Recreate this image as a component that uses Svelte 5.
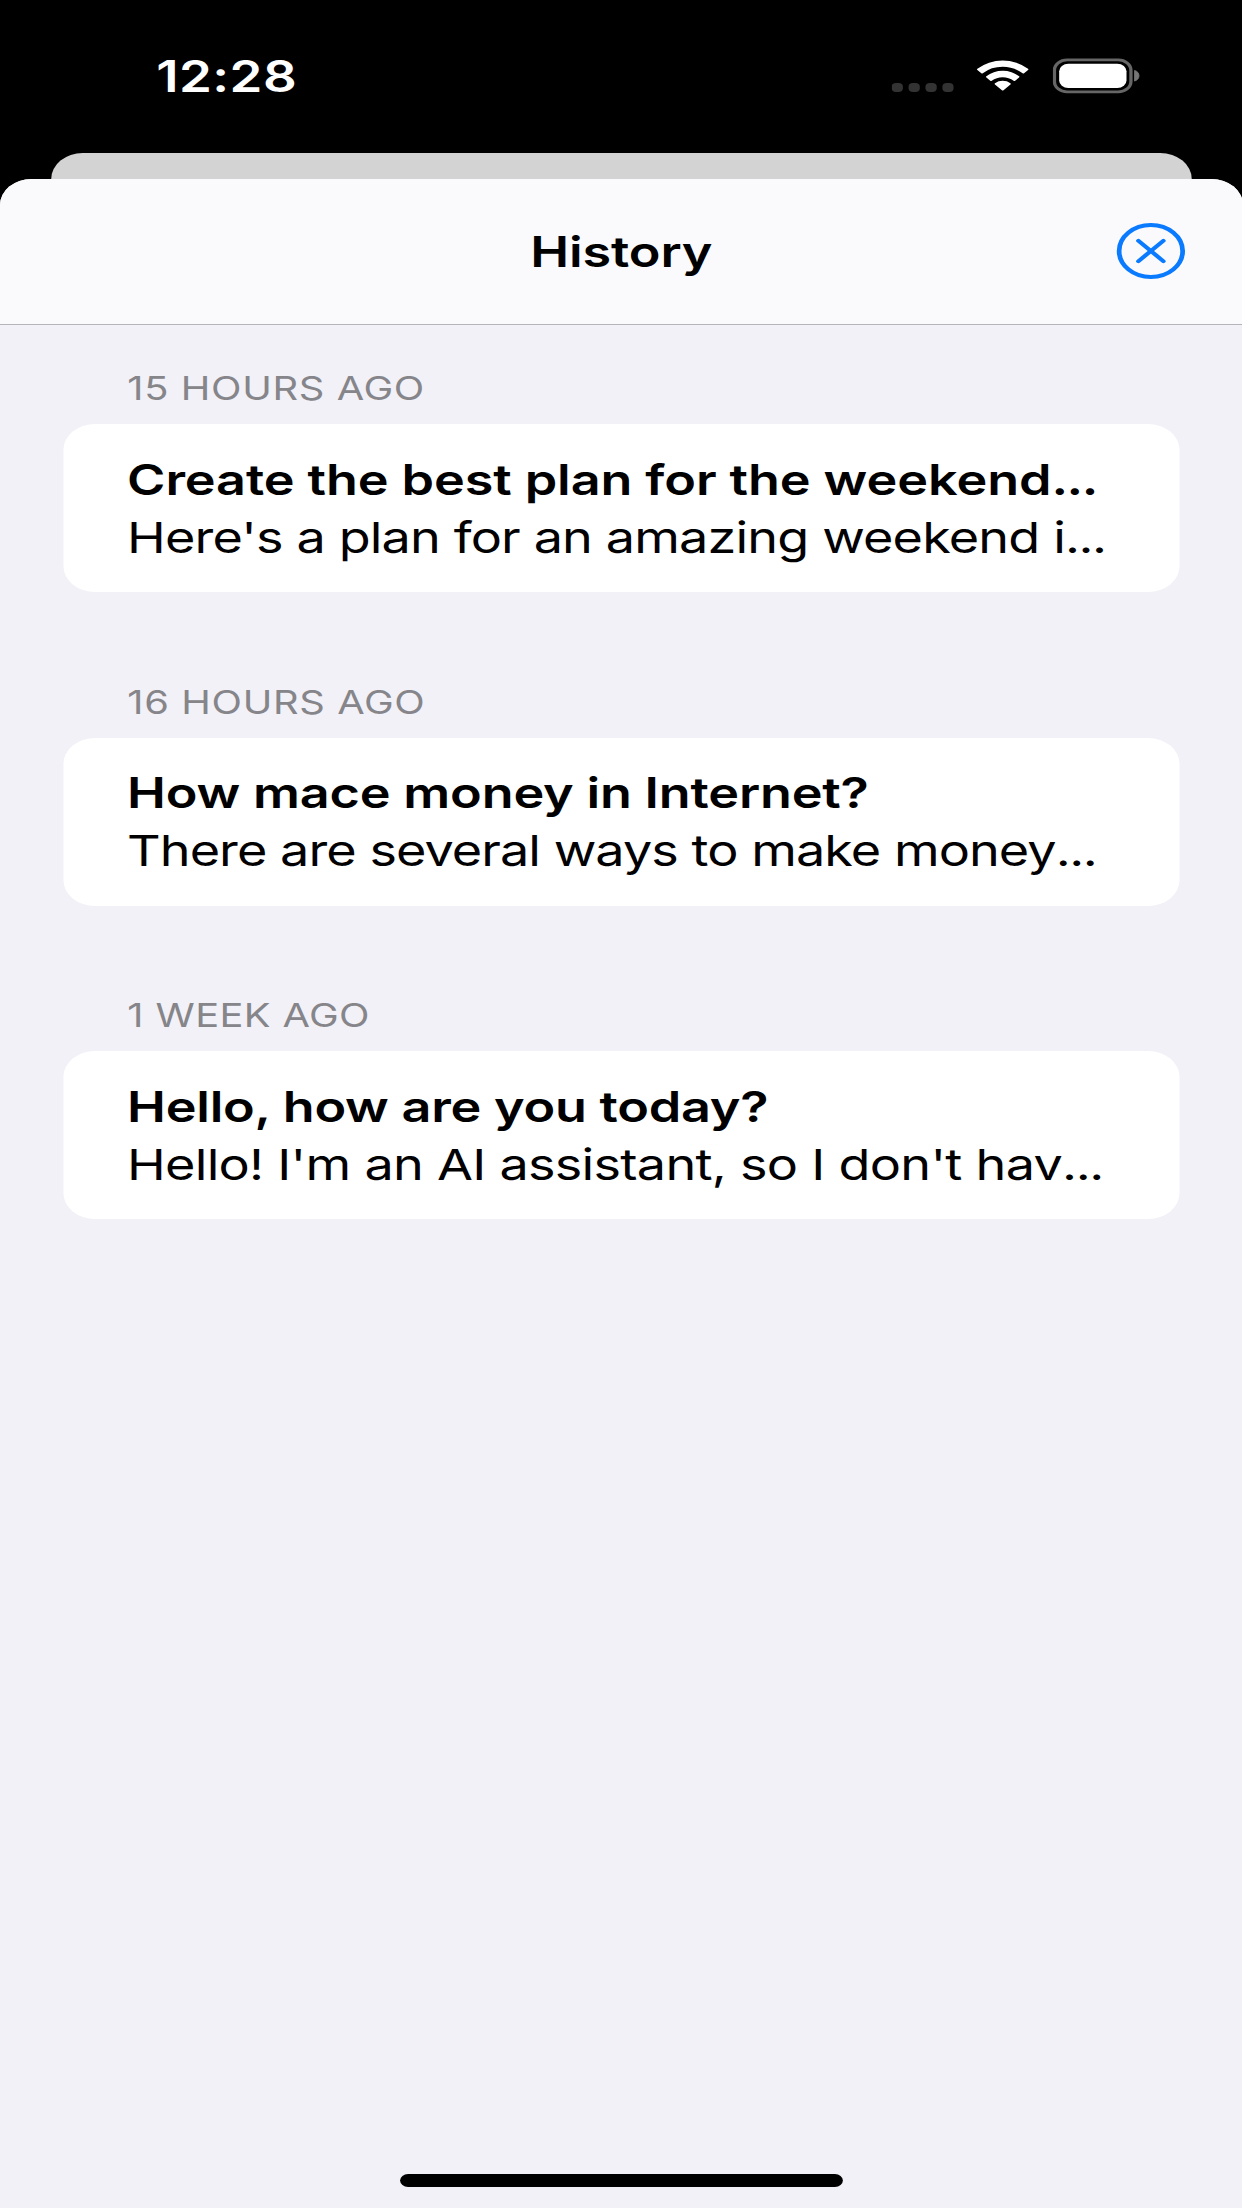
<script>
  let time = '12:28';

  // spacing values are letter-spacing in px
  const sections = [
    {
      when: '15 hours ago',
      whenSpacing: 0.2,
      title: 'Create the best plan for the weekend',
      titleCut: true,
      preview: "Here's a plan for an amazing weekend i",
      titleSpacing: -0.03,
      previewSpacing: -0.27
    },
    {
      when: '16 hours ago',
      whenSpacing: 0.2,
      title: 'How mace money in Internet?',
      titleCut: false,
      preview: 'There are several ways to make money',
      titleSpacing: -0.06,
      previewSpacing: -0.3
    },
    {
      when: '1 week ago',
      whenSpacing: 0.12,
      title: 'Hello, how are you today?',
      titleCut: false,
      preview: "Hello! I'm an AI assistant, so I don't hav",
      titleSpacing: -0.08,
      previewSpacing: -0.23
    }
  ];
</script>

<div class="window">
  <div class="screen">
    <div class="status-bar">
      <span class="time">{time}</span>
      <div class="status-icons">
        <svg class="signal" width="19.6" height="14" viewBox="0 0 19.6 14">
          {#each [0, 1, 2, 3] as i}
            <rect x={i * 5.35} y="9.6" width="3.55" height="3.5" rx="1.4" fill="#333" />
          {/each}
        </svg>
        <svg class="wifi" width="17" height="14" viewBox="0 0 17 14" fill="#fff">
          <path d="M8.5 3.4c2.35 0 4.6.9 6.3 2.5.13.12.33.12.46 0l1.25-1.25a.34.34 0 0 0 0-.48 11.65 11.65 0 0 0-16.02 0 .34.34 0 0 0 0 .48L1.74 5.9c.13.12.33.12.46 0A9.2 9.2 0 0 1 8.5 3.4z" />
          <path d="M8.5 7.45c1.28 0 2.52.48 3.47 1.34.13.12.33.12.46 0l1.24-1.26a.34.34 0 0 0 0-.5 7.5 7.5 0 0 0-10.34 0 .34.34 0 0 0 0 .5l1.24 1.26c.13.12.33.12.46 0A5.2 5.2 0 0 1 8.5 7.45z" />
          <path d="M10.95 10.22a.34.34 0 0 0 0-.5 3.8 3.8 0 0 0-4.9 0 .34.34 0 0 0 0 .5l2.2 2.2c.14.13.36.13.5 0z" />
        </svg>
        <svg class="battery" width="28" height="14" viewBox="0 0 28 14">
          <rect x="0.55" y="0.75" width="24.2" height="12.3" rx="4" fill="none" stroke="#666" stroke-width="1.05" />
          <rect x="2.05" y="2.2" width="21.3" height="9.4" rx="2.9" fill="#fff" />
          <path d="M25.9 4.8v4.1a2.2 2.2 0 0 0 0-4.1z" fill="#777" stroke="#777" stroke-width="0.3" />
        </svg>
      </div>
    </div>

    <div class="back-sheet"></div>

    <div class="sheet">
      <header>
        <h1>History</h1>
        <button class="close" aria-label="Close">
          <svg width="22" height="22" viewBox="0 0 22 22" fill="none" stroke="#0a7aff">
            <circle cx="11" cy="10.8" r="10.05" stroke-width="1.5" />
            <path d="M7.05 6.85l7.9 7.9M14.95 6.85l-7.9 7.9" stroke-width="1.45" stroke-linecap="round" />
          </svg>
        </button>
      </header>

      <main>
        {#each sections as section}
          <section>
            <h2 style="letter-spacing: {section.whenSpacing}px;">{section.when}</h2>
            <div class="card">
              <div class="title" style="letter-spacing: {section.titleSpacing}px;">
                {section.title}{#if section.titleCut}<span class="dots">...</span>{/if}
              </div>
              <div class="preview" style="letter-spacing: {section.previewSpacing}px;">
                {section.preview}<span class="dots">...</span>
              </div>
            </div>
          </section>
        {/each}
      </main>

      <div class="home-indicator"></div>
    </div>
  </div>
</div>

<style>
  :global(body) {
    background: #000;
  }

  .window {
    width: 100vw;
    height: 100vh;
    overflow: hidden;
  }

  /* laid out at 393x852 points and stretched over the window */
  .screen {
    width: 393.1px;
    height: 852px;
    display: flex;
    flex-direction: column;
    background: #000;
    color: #000;
    font-family: Inter, 'Liberation Sans', sans-serif;
    zoom: 2.59155;
    transform: scaleX(1.2198);
    transform-origin: 0 0;
  }

  .status-bar {
    height: 59px;
    flex: none;
    box-sizing: border-box;
    padding: 18.7px 32.2px 0 49.4px;
    display: flex;
    justify-content: space-between;
    align-items: flex-start;
  }

  .time {
    color: #fff;
    font-size: 16.7px;
    font-weight: 600;
    line-height: 22px;
    letter-spacing: 0.15px;
  }

  .status-icons {
    display: flex;
    padding-top: 3.6px;
  }

  .wifi {
    margin-left: 6.9px;
  }

  .battery {
    margin-left: 7.3px;
  }

  .back-sheet {
    height: 10px;
    flex: none;
    margin: 0 16.2px;
    border-radius: 10px 10px 0 0;
    background: #d3d3d3;
  }

  .sheet {
    flex: 1;
    display: flex;
    flex-direction: column;
    border-radius: 10px 10px 0 0;
    background: #f2f1f7;
    overflow: hidden;
  }

  header {
    height: 56.3px;
    flex: none;
    box-sizing: border-box;
    display: grid;
    grid-template-columns: 1fr auto 1fr;
    align-items: center;
    padding: 0 18.2px;
    background: #fafafd;
    border-bottom: 0.4px solid #b5b4b9;
  }

  h1 {
    grid-column: 2;
    margin: 0;
    font-size: 16.5px;
    font-weight: 600;
    line-height: 22px;
    letter-spacing: -0.05px;
  }

  .close {
    justify-self: end;
    display: flex;
    padding: 0;
    border: 0;
    background: none;
  }

  main {
    padding: 16.8px 20.1px 0;
    display: flex;
    flex-direction: column;
    gap: 34.6px;
  }

  h2 {
    margin: 0 20.2px 5.6px;
    font-size: 12.6px;
    font-weight: 400;
    line-height: 16px;
    color: #85858a;
    text-transform: uppercase;
    white-space: nowrap;
  }

  .card {
    height: 64.8px;
    box-sizing: border-box;
    padding: 10.2px 20.1px 0;
    border-radius: 10px;
    background: #fff;
    font-size: 16.5px;
    line-height: 22.5px;
    white-space: nowrap;
  }

  .title {
    font-weight: 600;
  }

  .dots {
    letter-spacing: -0.45px;
  }

  .home-indicator {
    width: 140px;
    height: 5px;
    margin: auto auto 8px;
    border-radius: 2.5px;
    background: #000;
  }
</style>
